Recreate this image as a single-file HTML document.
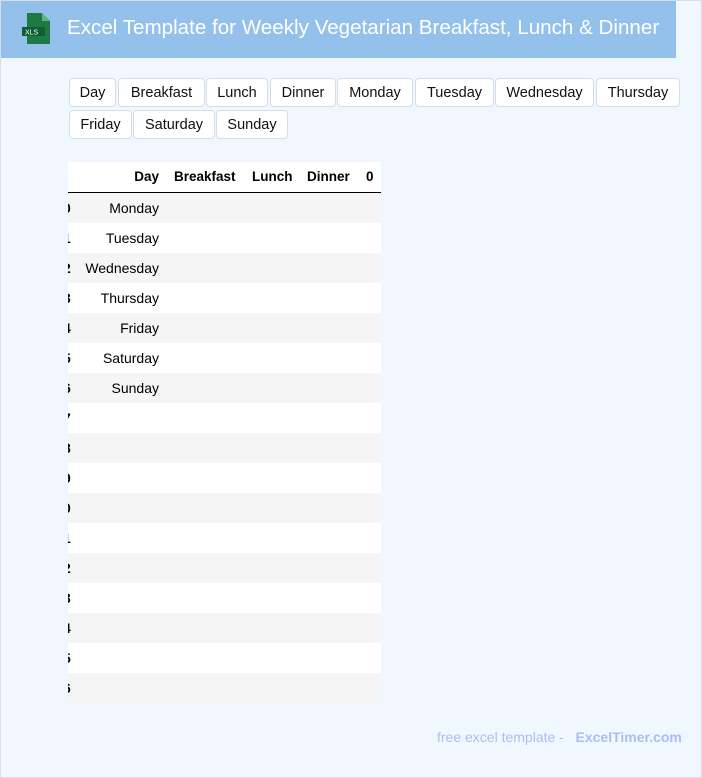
<!DOCTYPE html>
<html><head><style>
body{margin:0;width:702px;height:778px;font-family:"Liberation Sans",Arial,sans-serif;}
.page{position:absolute;left:0;top:0;width:702px;height:778px;background:#f0f7ff;border:1px solid #d8dee6;box-sizing:border-box;}
.hdr{position:absolute;left:0;top:0;width:675px;height:57px;background:#93c1ec;}
.hdr .t{position:absolute;left:66px;top:15px;color:#fff;font-size:20.6px;white-space:nowrap;}
.btn{position:absolute;height:27px;border:1px solid #d5dde6;border-radius:4px;background:#fff;font-size:14.5px;line-height:29px;text-align:center;color:#111;box-sizing:content-box;}
.tbl{position:absolute;left:67px;top:161px;width:313px;overflow:hidden;}
.row{height:30px;position:relative;font-size:14px;line-height:30px;}
.row span{position:absolute;}
.h{font-weight:bold;border-bottom:1px solid #000;height:30px;background:#fff;font-size:13.5px;}
.foot{position:absolute;top:728px;left:436px;font-size:14px;color:#a9bff0;white-space:nowrap;}
</style></head><body><div class="page">
<div class="hdr">
<svg style="position:absolute;left:21px;top:12px" width="28" height="31" viewBox="0 0 28 31"><path d="M5 0h15l8 8v23H5z" fill="#1e7a44"/><path d="M20 0v8h8z" fill="#5fb47e"/><rect x="0" y="14" width="23" height="9" fill="#115e33"/><text x="3" y="21.5" font-size="7" fill="#fff" font-family="Liberation Sans">XLS</text></svg>
<div class="t">Excel Template for Weekly Vegetarian Breakfast, Lunch &amp; Dinner</div></div>
<div class="btn" style="left:68px;top:77px;width:45px">Day</div>
<div class="btn" style="left:117px;top:77px;width:85px">Breakfast</div>
<div class="btn" style="left:205px;top:77px;width:60px">Lunch</div>
<div class="btn" style="left:269px;top:77px;width:64px">Dinner</div>
<div class="btn" style="left:336px;top:77px;width:74px">Monday</div>
<div class="btn" style="left:414px;top:77px;width:77px">Tuesday</div>
<div class="btn" style="left:494px;top:77px;width:97px">Wednesday</div>
<div class="btn" style="left:595px;top:77px;width:82px">Thursday</div>
<div class="btn" style="left:68px;top:109px;width:61px">Friday</div>
<div class="btn" style="left:132px;top:109px;width:80px">Saturday</div>
<div class="btn" style="left:215px;top:109px;width:70px">Sunday</div>
<div class="tbl">
<div class="row h"><span style="right:222px">Day</span><span style="left:106px">Breakfast</span><span style="left:184px">Lunch</span><span style="left:239px">Dinner</span><span style="left:298px">0</span></div>
<div id="rows"></div>
</div>
<div class="foot">free excel template - &nbsp;&nbsp;<b>ExcelTimer.com</b></div>
</div>
<script>
var d=["Monday","Tuesday","Wednesday","Thursday","Friday","Saturday","Sunday"],h="";
for(var i=0;i<17;i++){h+='<div class="row" style="background:'+(i%2?'#fff':'#f5f5f5')+'"><span style="left:-5px;font-weight:bold">'+(i%10)+'</span><span style="right:222px">'+(d[i]||"")+'</span></div>';}
document.getElementById("rows").innerHTML=h;
</script>
</body></html>
